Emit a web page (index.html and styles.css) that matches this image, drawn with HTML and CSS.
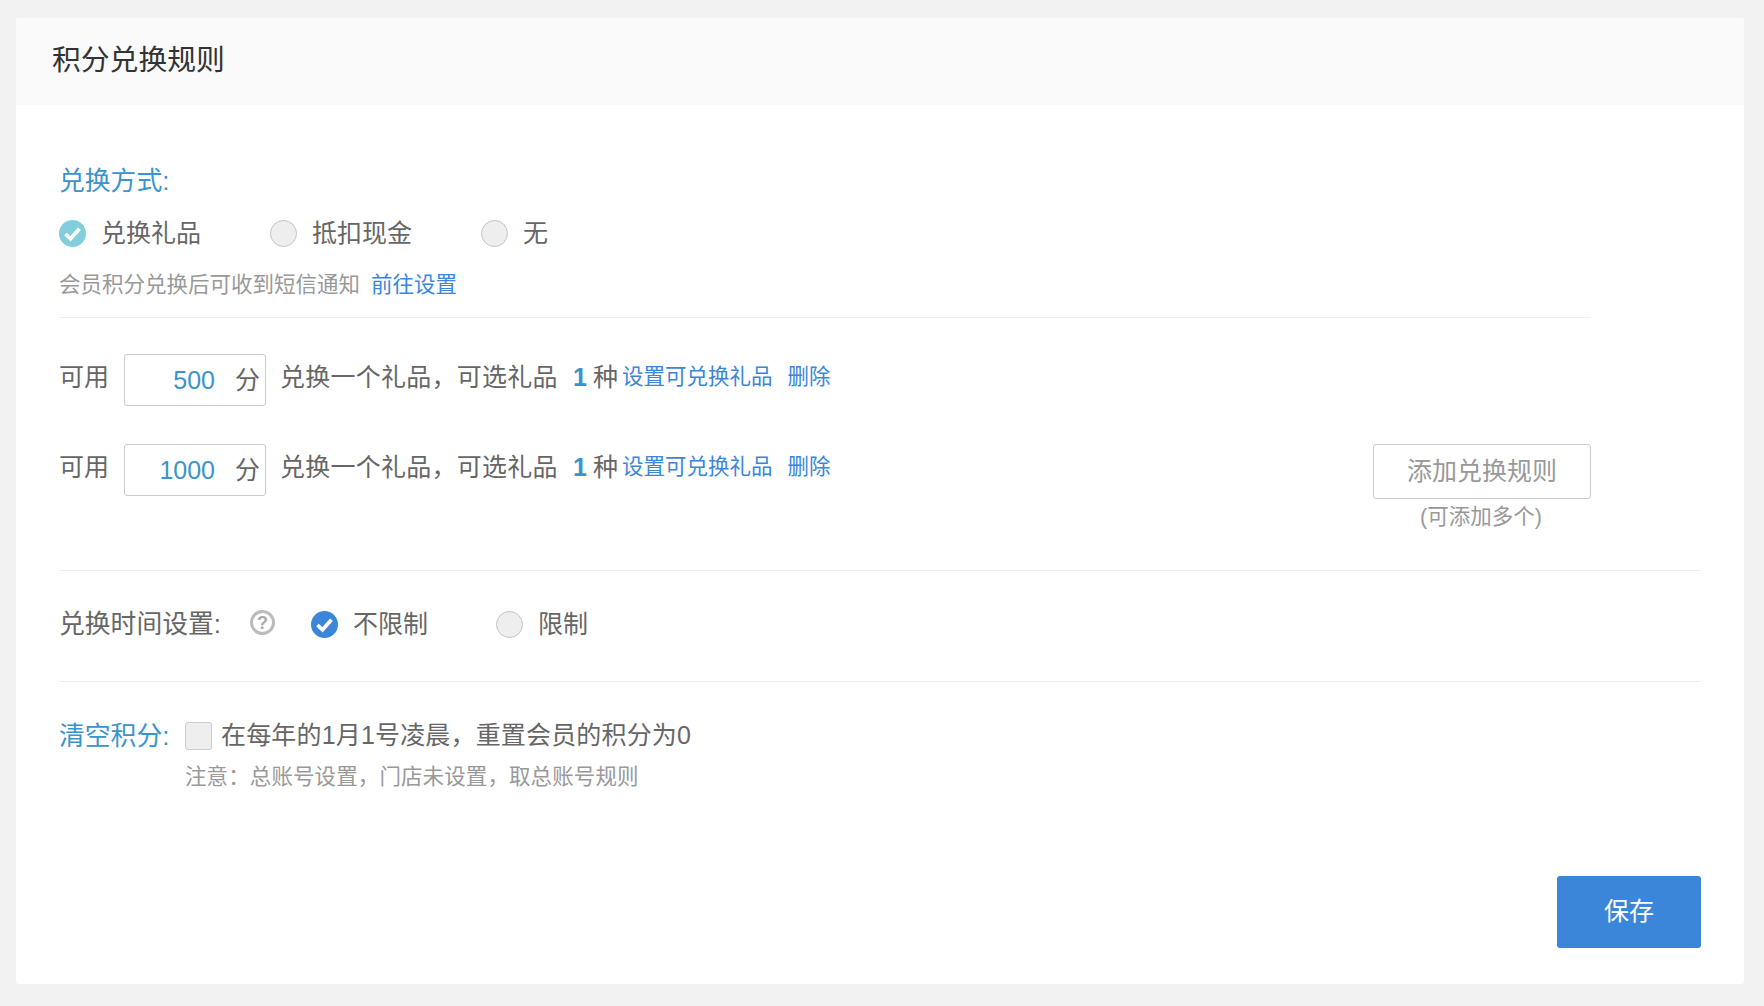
FILE: index.html
```html
<!DOCTYPE html>
<html lang="zh">
<head>
<meta charset="utf-8">
<title>积分兑换规则</title>
<link rel="stylesheet" href="styles.css">
</head>
<body>
<div class="card">
  <header class="card-head">积分兑换规则</header>
  <main class="card-body">
    <section class="method">
      <div class="label blue">兑换方式:</div>
      <div class="radio-row">
        <span class="radio checked teal"><svg viewBox="0 0 27 27"><path d="M6.5 14l5 4.8 9-10" /></svg></span><span class="radio-text w1">兑换礼品</span>
        <span class="radio"></span><span class="radio-text w2">抵扣现金</span>
        <span class="radio"></span><span class="radio-text">无</span>
      </div>
      <div class="hint">会员积分兑换后可收到短信通知<a class="link hint-link">前往设置</a></div>
    </section>

    <section class="rules">
      <div class="rule">
        <span class="rule-text">可用</span>
        <span class="points"><span class="num">500</span><span class="unit">分</span></span>
        <span class="rule-text desc">兑换一个礼品&#65292;可选礼品</span><b class="count">1</b><span class="rule-text">种</span>
        <a class="link set">设置可兑换礼品</a><a class="link del">删除</a>
      </div>
      <div class="rule second">
        <span class="rule-text">可用</span>
        <span class="points"><span class="num">1000</span><span class="unit">分</span></span>
        <span class="rule-text desc">兑换一个礼品&#65292;可选礼品</span><b class="count">1</b><span class="rule-text">种</span>
        <a class="link set">设置可兑换礼品</a><a class="link del">删除</a>
        <div class="add">
          <button class="add-btn">添加兑换规则</button>
          <div class="add-note">(可添加多个)</div>
        </div>
      </div>
    </section>

    <section class="time">
      <span class="label time-label">兑换时间设置:</span>
      <svg class="help" viewBox="0 0 25 25"><circle cx="12.5" cy="12.5" r="11" /><text x="12.5" y="18.5" text-anchor="middle">?</text></svg>
      <span class="radio checked blue-fill"><svg viewBox="0 0 27 27"><path d="M6.5 14l5 4.8 9-10" /></svg></span><span class="radio-text w3">不限制</span>
      <span class="radio"></span><span class="radio-text">限制</span>
    </section>

    <section class="clear">
      <div class="clear-row">
        <span class="label blue clear-label">清空积分:</span>
        <span class="checkbox"></span>
        <span class="clear-text">在每年的1月1号凌晨&#65292;重置会员的积分为0</span>
      </div>
      <div class="note">注意&#65306;总账号设置&#65292;门店未设置&#65292;取总账号规则</div>
    </section>

    <div class="actions"><button class="save">保存</button></div>
  </main>
</div>
</body>
</html>
```
FILE: styles.css
```css
* { box-sizing: border-box; }
html, body { margin: 0; height: 100%; }
body {
  background: #f2f2f2;
  padding: 18px 20px 22px 16px;
  font-family: "Liberation Sans", "Noto Sans CJK SC", sans-serif;
  color: #666;
  overflow: hidden;
}
.card { height: 966px; background: #fff; border-radius: 3px; overflow: hidden; }
.card-head {
  height: 87px;
  background: #fafafa;
  padding-left: 36px;
  font-size: 28.8px;
  line-height: 84px;
  color: #333;
}
.card-body { padding: 0 43px; }
.label { font-size: 25.8px; line-height: 32px; color: #555; }
.blue { color: #3a94cb; }

.method { width: 1532px; height: 213px; padding-top: 60px; border-bottom: 1px solid #f0f0f0; }
.radio-row { display: flex; align-items: center; height: 32px; margin-top: 20px; }
.radio {
  flex: none;
  width: 27px;
  height: 27px;
  border-radius: 50%;
  background: #eee;
  border: 1px solid #c4c4c4;
  display: block;
}
.radio svg { display: block; width: 100%; height: 100%; fill: none; stroke: #fff; stroke-width: 3.8; }
.radio.checked { border: 0; }
.teal { background: #83cedc; }
.blue-fill { background: #3b86d9; }
.radio-text { font-size: 25px; line-height: 32px; margin-left: 15px; color: #666; }
.w1 { margin-right: 69px; }
.w2 { margin-right: 69px; }
.w3 { margin-right: 68px; }
.hint { font-size: 21.5px; line-height: 32px; margin-top: 20px; color: #999; }
.link { color: #3b86d9; cursor: pointer; }
.hint-link { margin-left: 11px; }

.rules { height: 253px; padding-top: 36px; border-bottom: 1px solid #f0f0f0; }
.rule { display: flex; align-items: flex-start; height: 52px; }
.second { margin-top: 38px; }
.rule-text { font-size: 25px; line-height: 46px; color: #666; white-space: nowrap; }
.points {
  flex: none;
  width: 142px;
  height: 52px;
  margin-left: 15px;
  margin-right: 14px;
  border: 1px solid #ccc;
  border-radius: 3px;
  display: flex;
  align-items: center;
  justify-content: flex-end;
  padding-right: 5px;
}
.num { font-size: 25px; color: #3a94cb; }
.unit { font-size: 25px; color: #666; margin-left: 20px; margin-top: -4px; }
.desc { width: 293px; letter-spacing: 0.25px; }
.count { font-size: 25px; line-height: 46px; color: #3a94cb; margin-right: 6px; }
.set, .del { font-size: 21.5px; line-height: 46px; white-space: nowrap; }
.set { margin-left: 4px; }
.del { margin-left: 15px; }
.add { margin-left: auto; margin-right: 110px; width: 218px; }
.add-btn {
  display: block;
  width: 218px;
  height: 55px;
  padding: 0 0 5px;
  background: #fff;
  border: 1px solid #ccc;
  border-radius: 3px;
  font: inherit;
  font-size: 25px;
  color: #999;
}
.add-note { font-size: 21.5px; line-height: 30px; margin-top: 3px; padding-right: 2px; text-align: center; color: #999; }

.time { display: flex; align-items: center; height: 111px; padding-bottom: 4px; border-bottom: 1px solid #f0f0f0; }
.time-label { width: 191px; color: #666; }
.help { flex: none; width: 25px; height: 25px; margin-top: -4px; margin-right: 36px; }
.help circle { fill: none; stroke: #bbb; stroke-width: 3; }
.help text { font-size: 18px; font-weight: bold; fill: #aaa; font-family: "Liberation Sans", sans-serif; }

.clear { padding-top: 38px; }
.clear-row { display: flex; align-items: center; height: 32px; }
.clear-label { width: 126px; }
.checkbox {
  flex: none;
  width: 27px;
  height: 28px;
  background: #eee;
  border: 1px solid #ccc;
  border-radius: 3px;
}
.clear-text { font-size: 25px; line-height: 32px; margin-left: 9px; margin-top: -2px; letter-spacing: 0.17px; color: #666; }
.note { font-size: 21.5px; line-height: 30px; margin-top: 10px; padding-left: 126px; letter-spacing: 0.1px; color: #999; }

.actions { display: flex; justify-content: flex-end; margin-top: 84px; }
.save {
  width: 144px;
  height: 72px;
  padding: 0 0 7px;
  background: #3b86d9;
  color: #fff;
  border: 0;
  border-radius: 3px;
  font: inherit;
  font-size: 25px;
}
```
